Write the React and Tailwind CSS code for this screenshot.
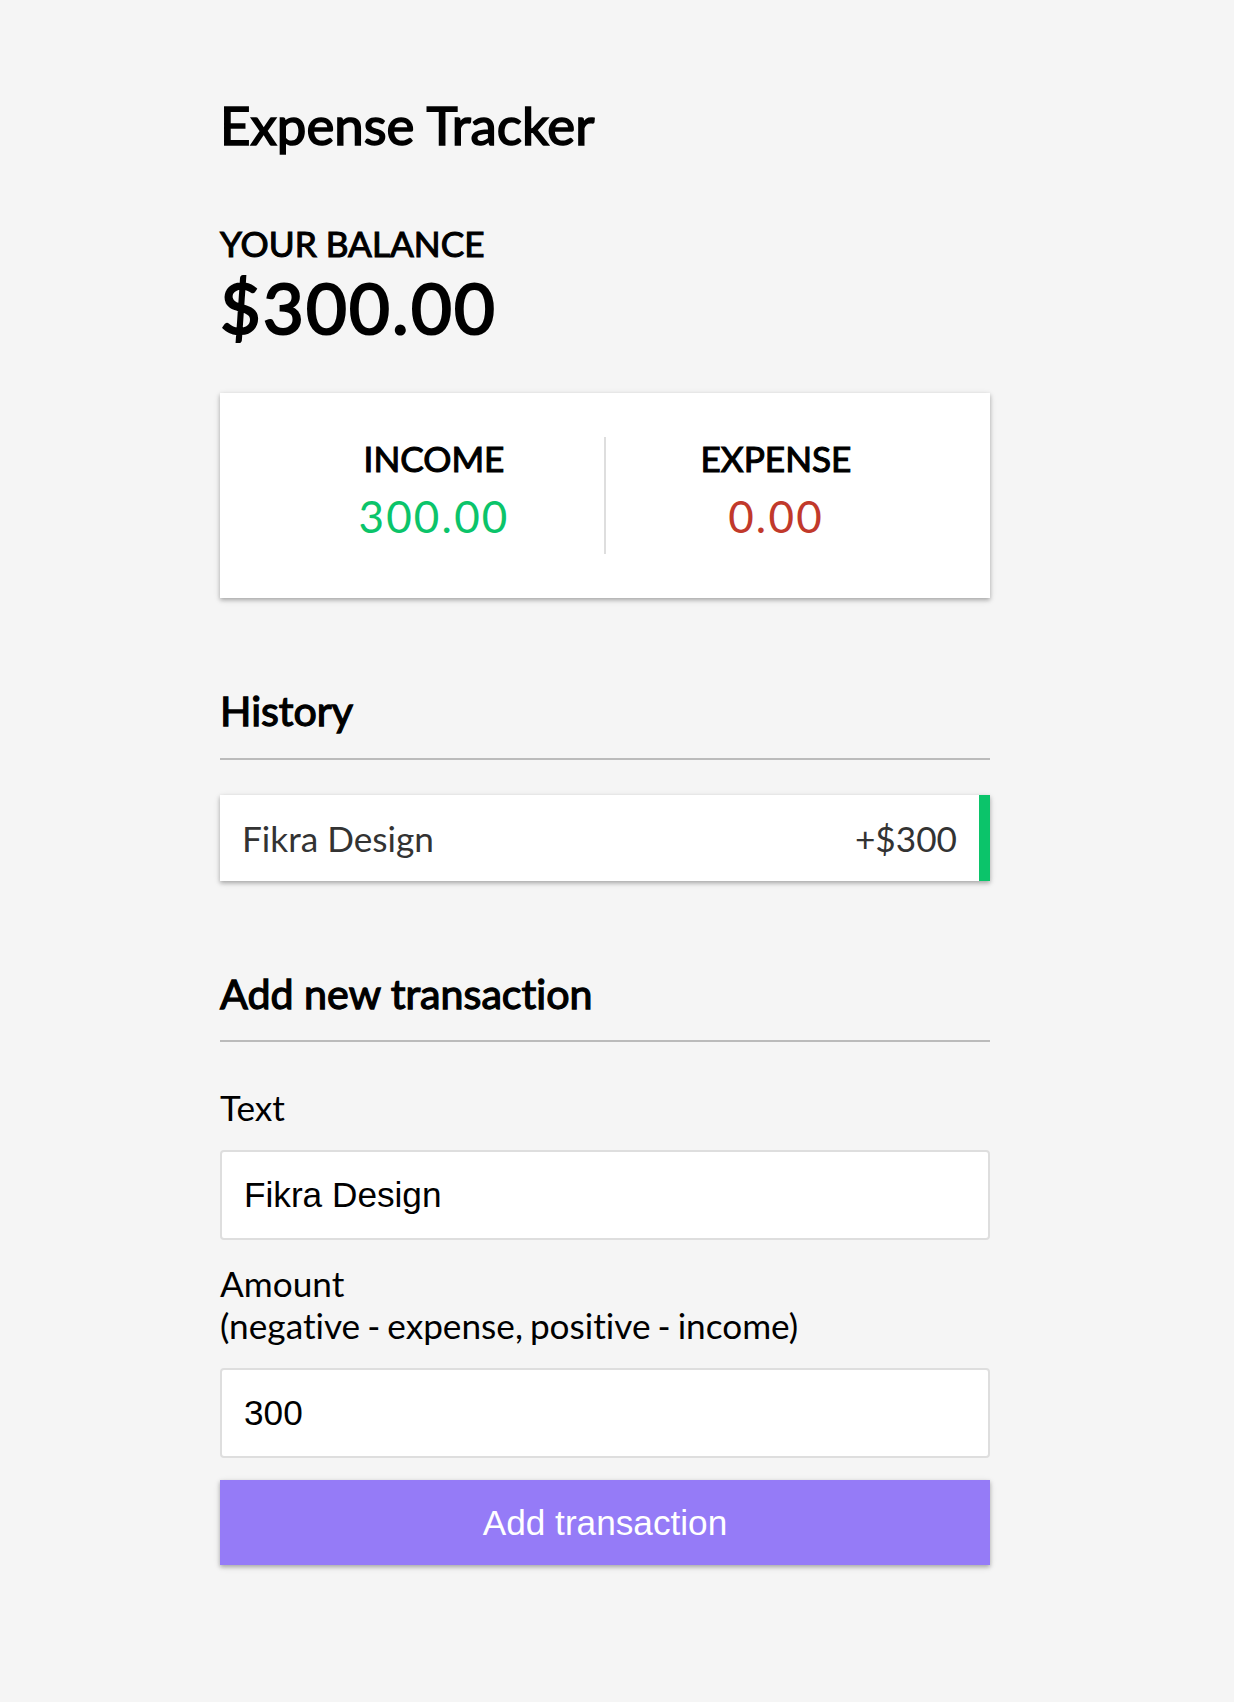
import { useState } from "react";

const shadow = "shadow-[0_2px_7px_rgba(0,0,0,0.12),0_2px_4px_rgba(0,0,0,0.24)]";

export default function App() {
  const [text, setText] = useState("Fikra Design");
  const [amount, setAmount] = useState("300");

  return (
    <div className="min-h-screen bg-[#f5f5f5] font-['Lato',sans-serif] text-[35.2px] leading-[normal] text-black [font-variant-ligatures:none]">
      <div className="ml-[220px] w-[770px] pt-[93px] pb-[66px]">
        <h2 className="text-[52.8px] leading-[63.36px] font-normal [-webkit-text-stroke:1.6px_currentColor]">Expense Tracker</h2>

        <h4 className="mt-[66px] text-[35.2px] leading-[42.24px] font-normal uppercase [-webkit-text-stroke:1.1px_currentColor]">Your Balance</h4>
        <h1 className="text-[70.4px] leading-[84.48px] font-normal tracking-[2.2px] [-webkit-text-stroke:2.2px_currentColor]">$300.00</h1>

        <div className={`mt-[44px] flex bg-white p-[44px] ${shadow}`}>
          <div className="flex-1 border-r-[2px] border-[#dedede] text-center">
            <h4 className="text-[35.2px] leading-[42.24px] font-normal uppercase [-webkit-text-stroke:1.1px_currentColor]">Income</h4>
            <p className="my-[11px] text-[44px] leading-[52.8px] tracking-[2.2px] text-[#0bc46a]">300.00</p>
          </div>
          <div className="flex-1 text-center">
            <h4 className="text-[35.2px] leading-[42.24px] font-normal uppercase [-webkit-text-stroke:1.1px_currentColor]">Expense</h4>
            <p className="my-[11px] text-[44px] leading-[52.8px] tracking-[2.2px] text-[#c1392b]">0.00</p>
          </div>
        </div>

        <h3 className="mt-[88px] border-b-[2px] border-[#bbbbbb] pb-[22px] text-[41.2px] leading-[49.4px] font-normal [-webkit-text-stroke:1.3px_currentColor]">History</h3>
        <ul className="mt-[35px]">
          <li className={`flex justify-between border-r-[11px] border-[#0bc46a] bg-white p-[22px] text-[#333] ${shadow}`}>
            Fikra Design <span>+$300</span>
          </li>
        </ul>

        <h3 className="mt-[88px] mb-[22px] border-b-[2px] border-[#bbbbbb] pb-[22px] text-[41.2px] leading-[49.4px] font-normal [-webkit-text-stroke:1.3px_currentColor]">Add new transaction</h3>
        <form onSubmit={(e) => e.preventDefault()}>
          <div>
            <label className="my-[22px] inline-block">Text</label>
            <input
              type="text"
              value={text}
              onChange={(e) => setText(e.target.value)}
              className="block w-full rounded-[4px] border-[2px] border-[#dedede] bg-white p-[22px] font-['Liberation_Sans',Arial,sans-serif] text-[35.2px] leading-[42px] text-black outline-none"
            />
          </div>
          <div>
            <label className="my-[22px] inline-block [word-spacing:-2px]">
              Amount <br />
              (negative - expense, positive - income)
            </label>
            <input
              type="number"
              value={amount}
              onChange={(e) => setAmount(e.target.value)}
              className="block w-full rounded-[4px] border-[2px] border-[#dedede] bg-white p-[22px] font-['Liberation_Sans',Arial,sans-serif] text-[35.2px] leading-[42px] text-black outline-none [appearance:textfield] [&::-webkit-inner-spin-button]:appearance-none"
            />
          </div>
          <button
            type="submit"
            className={`mt-[22px] block w-full bg-[#957bf7] p-[22px] font-['Liberation_Sans',Arial,sans-serif] text-[35.2px] leading-[41px] text-white ${shadow}`}
          >
            Add transaction
          </button>
        </form>
      </div>
    </div>
  );
}
